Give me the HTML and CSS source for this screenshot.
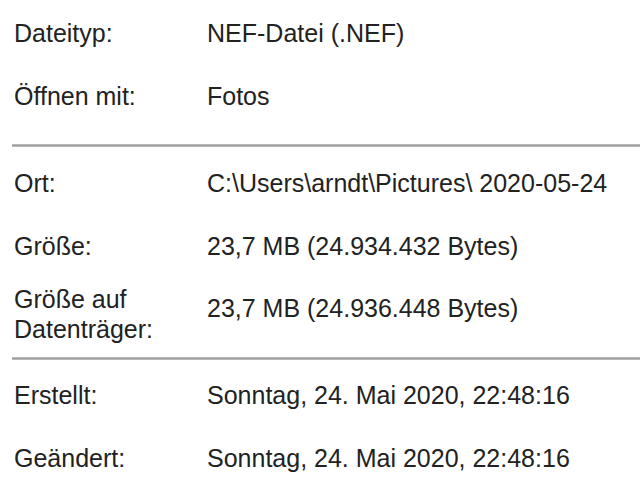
FILE: index.html
```html
<!DOCTYPE html>
<html lang="de">
<head>
<meta charset="utf-8">
<title>Eigenschaften</title>
<link rel="stylesheet" href="styles.css">
</head>
<body>
<div class="props">
  <section class="group group-first">
    <div class="row"><div class="label">Dateityp:</div><div class="value">NEF-Datei (.NEF)</div></div>
    <div class="row"><div class="label">Öffnen mit:</div><div class="value">Fotos</div></div>
  </section>
  <div class="divider"></div>
  <section class="group group-second">
    <div class="row"><div class="label">Ort:</div><div class="value">C:\Users\arndt\Pictures\ 2020-05-24</div></div>
    <div class="row"><div class="label">Größe:</div><div class="value">23,7 MB (24.934.432 Bytes)</div></div>
    <div class="row row-tall"><div class="label">Größe auf<br>Datenträger:</div><div class="value value-offset">23,7 MB (24.936.448 Bytes)</div></div>
  </section>
  <div class="divider"></div>
  <section class="group group-third">
    <div class="row"><div class="label">Erstellt:</div><div class="value">Sonntag, 24. Mai 2020, 22:48:16</div></div>
    <div class="row"><div class="label">Geändert:</div><div class="value">Sonntag, 24. Mai 2020, 22:48:16</div></div>
  </section>
</div>
</body>
</html>
```
FILE: styles.css
```css
html, body {
  margin: 0;
  padding: 0;
  background: #ffffff;
}

body {
  font-family: "Liberation Sans", Arial, sans-serif;
  font-size: 25px;
  line-height: 30px;
  color: #222222;
  width: 640px;
  height: 493px;
  overflow: hidden;
}

.props {
  display: flex;
  flex-direction: column;
}

.group-first {
  padding-top: 2px;
  padding-bottom: 16px;
}

.group-second {
  padding-top: 5px;
}

.group-third {
  padding-top: 4px;
}

.row {
  display: grid;
  grid-template-columns: 193px 1fr;
  padding: 16px 0 17px 14px;
  align-items: start;
}

.row-tall {
  padding: 6px 0 13px 14px;
}

.value-offset {
  padding-top: 9px;
}

.label, .value {
  white-space: nowrap;
}

.divider {
  height: 3px;
  margin-left: 12px;
  background: linear-gradient(to bottom, #c9c9c9 0%, #9c9c9c 50%, #c9c9c9 100%);
}
```
